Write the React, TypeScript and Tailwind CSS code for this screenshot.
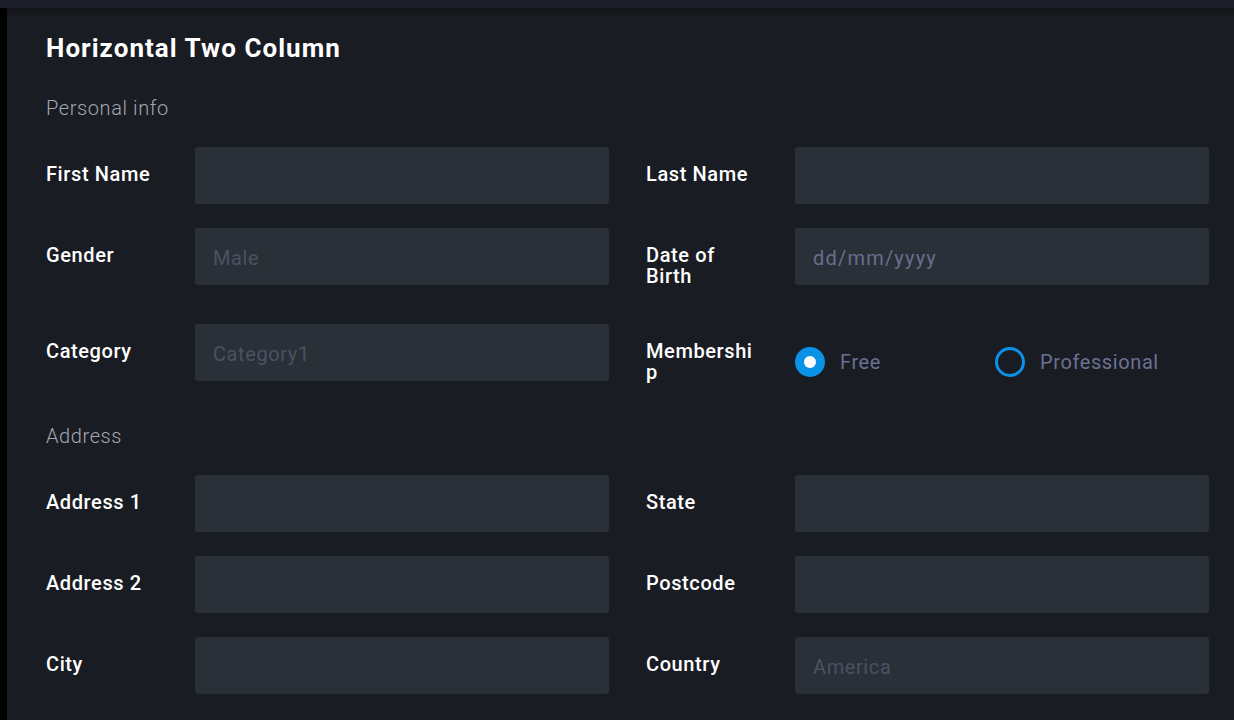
import React from "react";

type Field = { label: string; placeholder?: string; bright?: boolean };

const personalRows: [Field, Field | "radio"][] = [
  [{ label: "First Name" }, { label: "Last Name" }],
  [{ label: "Gender", placeholder: "Male" }, { label: "Date of Birth", placeholder: "dd/mm/yyyy", bright: true }],
  [{ label: "Category", placeholder: "Category1" }, "radio"],
];

const addressRows: [Field, Field][] = [
  [{ label: "Address 1" }, { label: "State" }],
  [{ label: "Address 2" }, { label: "Postcode" }],
  [{ label: "City" }, { label: "Country", placeholder: "America" }],
];

function Label({ text }: { text: string }) {
  return (
    <label className="w-[111px] shrink-0 mr-[38px] pt-[17px] pb-[13px] text-[20px] leading-[21px] font-medium tracking-[0.03em] text-white break-words">
      {text}
    </label>
  );
}

function Input({ field }: { field: Field }) {
  return (
    <div className="flex items-start w-[563px]">
      <Label text={field.label} />
      <div className="flex-1 h-[57px] rounded-[3px] bg-[#2a3038] flex items-center px-[18px] pt-[2px] text-[20px] tracking-[0.03em]">
        {field.placeholder && (
          <span className={field.bright ? "text-[#686e8c] tracking-[0.06em]" : "text-[#4a5162]"}>{field.placeholder}</span>
        )}
      </div>
    </div>
  );
}

function Radio({ checked, text }: { checked?: boolean; text: string }) {
  return (
    <div className="w-[200px] flex items-center gap-[15px]">
      {checked ? (
        <span className="w-[30px] h-[30px] rounded-full bg-[#0a92e6] flex items-center justify-center">
          <span className="w-[12px] h-[12px] rounded-full bg-white" />
        </span>
      ) : (
        <span className="w-[30px] h-[30px] rounded-full border-[3px] border-[#0a92e6]" />
      )}
      <span className="text-[20px] tracking-[0.03em] text-[#6b7193]">{text}</span>
    </div>
  );
}

function Membership() {
  return (
    <div className="flex items-start w-[563px]">
      <Label text="Membership" />
      <div className="flex-1 flex items-center pt-[23px]">
        <Radio checked text="Free" />
        <Radio text="Professional" />
      </div>
    </div>
  );
}

export default function App() {
  return (
    <div className="min-h-[720px] bg-black font-['Roboto',sans-serif]">
      <div className="h-[8px] bg-[#1c1e2a]" />
      <div className="ml-[7px] min-h-[712px] bg-[#1a1c23]">
        <div className="h-[10px] bg-gradient-to-b from-[#141519] to-[#1a1c23]" />
        <div className="pl-[39px] pr-[25px]">
          <h1 className="text-[26px] leading-[30px] font-bold tracking-[0.04em] text-white pt-[15px]">Horizontal Two Column</h1>

          <h2 className="mt-[32px] text-[20px] leading-[26px] font-light tracking-[0.03em] text-[#a3a7b0]">Personal info</h2>
          <div className="mt-[26px]">
            {personalRows.map(([a, b], i) => (
              <div key={i} className="flex gap-[37px] mb-[24px]">
                <Input field={a} />
                {b === "radio" ? <Membership /> : <Input field={b} />}
              </div>
            ))}
          </div>

          <h2 className="mt-[27px] text-[20px] leading-[26px] font-light tracking-[0.03em] text-[#a3a7b0]">Address</h2>
          <div className="mt-[26px]">
            {addressRows.map(([a, b], i) => (
              <div key={i} className="flex gap-[37px] mb-[24px]">
                <Input field={a} />
                <Input field={b} />
              </div>
            ))}
          </div>
        </div>
      </div>
    </div>
  );
}
